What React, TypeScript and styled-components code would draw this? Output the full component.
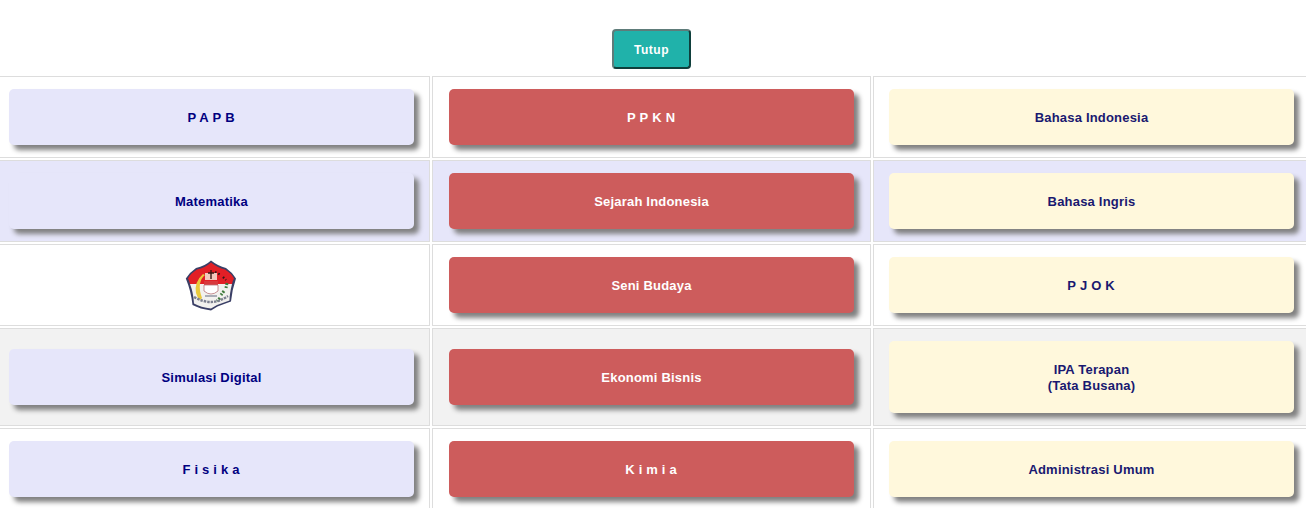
import * as React from 'react';
import styled, { createGlobalStyle } from 'styled-components';

type Tone = 'lavender' | 'red' | 'cream';
type Shade = 'plain' | 'lavender' | 'grey';

const toneBg: Record<Tone, string> = { lavender: '#E6E6FA', red: '#CD5C5C', cream: '#FFF8DC' };
const toneText: Record<Tone, string> = { lavender: '#000080', red: '#FFFFFF', cream: '#191970' };
const shadeBg: Record<Shade, string> = { plain: '#FFFFFF', lavender: '#E6E6FA', grey: '#F2F2F2' };

const GlobalStyle = createGlobalStyle`
    html, body {
        margin: 0;
        padding: 0;
        background: #FFFFFF;
        overflow: hidden;
    }
    body {
        font-family: "Liberation Sans", Arial, sans-serif;
    }
`;

const Page = styled.div`
    width: 1306px;
    height: 508px;
    overflow: hidden;
`;

const TopBar = styled.div`
    height: 76px;
    display: flex;
    justify-content: center;
    padding: 29px 3px 0 0;
    box-sizing: border-box;
`;

const CloseButton = styled.button`
    width: 79px;
    height: 40px;
    border-radius: 4px;
    border: 2px solid;
    border-color: #5E7C7A #0F3F3C #0F3F3C #5E7C7A;
    background: #20B2AA;
    color: #FFFFFF;
    font-family: "Liberation Sans", Arial, sans-serif;
    font-size: 12px;
    font-weight: bold;
    letter-spacing: 0.5px;
    padding: 2px 0 0;
`;

const Table = styled.div`
    display: grid;
    grid-template-columns: 439px 439px 437px;
    grid-template-rows: 82px 82px 82px 98px 82px;
    column-gap: 2px;
    row-gap: 2px;
    margin-left: -9px;
    width: 1319px;
`;

const Cell = styled.div<{ $shade: Shade }>`
    display: flex;
    align-items: center;
    justify-content: center;
    box-sizing: border-box;
    border: 1px solid #DDDDDD;
    background: ${props => shadeBg[props.$shade]};

    &:nth-child(3n + 1) {
        padding-left: 2px;
    }
`;

const SubjectButton = styled.div<{ $tone: Tone; $tall?: boolean }>`
    width: 405px;
    height: ${props => (props.$tall ? '72px' : '56px')};
    box-sizing: border-box;
    padding-top: 2px;
    border-radius: 5px;
    display: flex;
    align-items: center;
    justify-content: center;
    text-align: center;
    background: ${props => toneBg[props.$tone]};
    color: ${props => toneText[props.$tone]};
    box-shadow: 5px 5px 5px #808080;
    font-size: 13px;
    line-height: 16px;
    font-weight: bold;
    letter-spacing: 0.2px;
    white-space: pre-line;
`;

const Spaced = styled.span`
    letter-spacing: 4px;
    padding-left: 3px;
`;

const EmblemSvg = styled.svg`
    width: 52px;
    height: 52px;
    margin: 1px 2px 0 0;
    filter: blur(0.4px);
`;

const Emblem = () => (
    <EmblemSvg viewBox="0 0 52 52">
        <path d="M26 0.5 Q33 6 41 8 Q47 12 51 18.5 Q47 30 46 41.5 Q39 44 32.5 46.5 L26 50.5 Q15 49 7.5 45 Q6 31 0.8 18.5 Q5 12 11 8 Q20 6 26 0.5 Z" fill="#3A3F66" />
        <path d="M26 2.5 Q33 8 40 9.5 Q46 13 49 18.5 Q47.5 21 47 24 H5 Q4.5 21 3 18.5 Q6 13 12 9.5 Q20 8 26 2.5 Z" fill="#E21F26" />
        <path d="M5 24 H47 Q44.5 34 44.5 40.5 L32 45 L26 48.5 Q16 47.5 9 43.5 Q8.5 33 5 24 Z" fill="#F2F1EE" />
        <path d="M18 14 Q9 22 11 33 Q12 37 15 40 L17 38 Q14 30 15 24 Q16 18 20 15 Z" fill="#E9C93C" />
        <path d="M30 12 L36 15 M38 17 L41 20" stroke="#2A1A18" strokeWidth="2.2" strokeDasharray="1.6 2" fill="none" />
        <path d="M42 23 L41 28 M39 31 L36 35 M35 38 L32 41" stroke="#3F7A3C" strokeWidth="3" strokeDasharray="2 1.4" fill="none" />
        <rect x="20" y="13" width="12" height="7" fill="#F3C9BE" />
        <path d="M26 10 V19 M23 13 H29" stroke="#3A1B18" strokeWidth="1.4" />
        <path d="M19 21 H33 V25 H19 Z" fill="#D8383C" />
        <path d="M19 25 H33 V31 Q26 37 19 31 Z" fill="#FFFFFF" stroke="#B9757A" strokeWidth="0.8" />
        <path d="M9 37 Q18 42 26 42 Q34 42 43 36" stroke="#7C8090" strokeWidth="2.4" strokeDasharray="2.5 1" fill="none" />
        <path d="M20 36 L32 36" stroke="#8C90A0" strokeWidth="1.4" />
    </EmblemSvg>
);

type Item = { label: React.ReactNode; tone: Tone };
type Row = { shade: Shade; tall?: boolean; items: [Item | null, Item, Item] };

const rows: Row[] = [
    {
        shade: 'plain',
        items: [
            { label: <Spaced>PAPB</Spaced>, tone: 'lavender' },
            { label: <Spaced>PPKN</Spaced>, tone: 'red' },
            { label: 'Bahasa Indonesia', tone: 'cream' },
        ],
    },
    {
        shade: 'lavender',
        items: [
            { label: 'Matematika', tone: 'lavender' },
            { label: 'Sejarah Indonesia', tone: 'red' },
            { label: 'Bahasa Ingris', tone: 'cream' },
        ],
    },
    {
        shade: 'plain',
        items: [
            null,
            { label: 'Seni Budaya', tone: 'red' },
            { label: <Spaced>PJOK</Spaced>, tone: 'cream' },
        ],
    },
    {
        shade: 'grey',
        tall: true,
        items: [
            { label: 'Simulasi Digital', tone: 'lavender' },
            { label: 'Ekonomi Bisnis', tone: 'red' },
            { label: 'IPA Terapan\n(Tata Busana)', tone: 'cream' },
        ],
    },
    {
        shade: 'plain',
        items: [
            { label: <Spaced>Fisika</Spaced>, tone: 'lavender' },
            { label: <Spaced>Kimia</Spaced>, tone: 'red' },
            { label: 'Administrasi Umum', tone: 'cream' },
        ],
    },
];

export default function App() {
    return (
        <Page>
            <GlobalStyle />
            <TopBar>
                <CloseButton type="button">Tutup</CloseButton>
            </TopBar>
            <Table>
                {rows.map((row, r) =>
                    row.items.map((item, c) => (
                        <Cell key={`${r}-${c}`} $shade={row.shade}>
                            {item ? (
                                <SubjectButton $tone={item.tone} $tall={row.tall && c === 2}>
                                    {item.label}
                                </SubjectButton>
                            ) : (
                                <Emblem />
                            )}
                        </Cell>
                    ))
                )}
            </Table>
        </Page>
    );
}
